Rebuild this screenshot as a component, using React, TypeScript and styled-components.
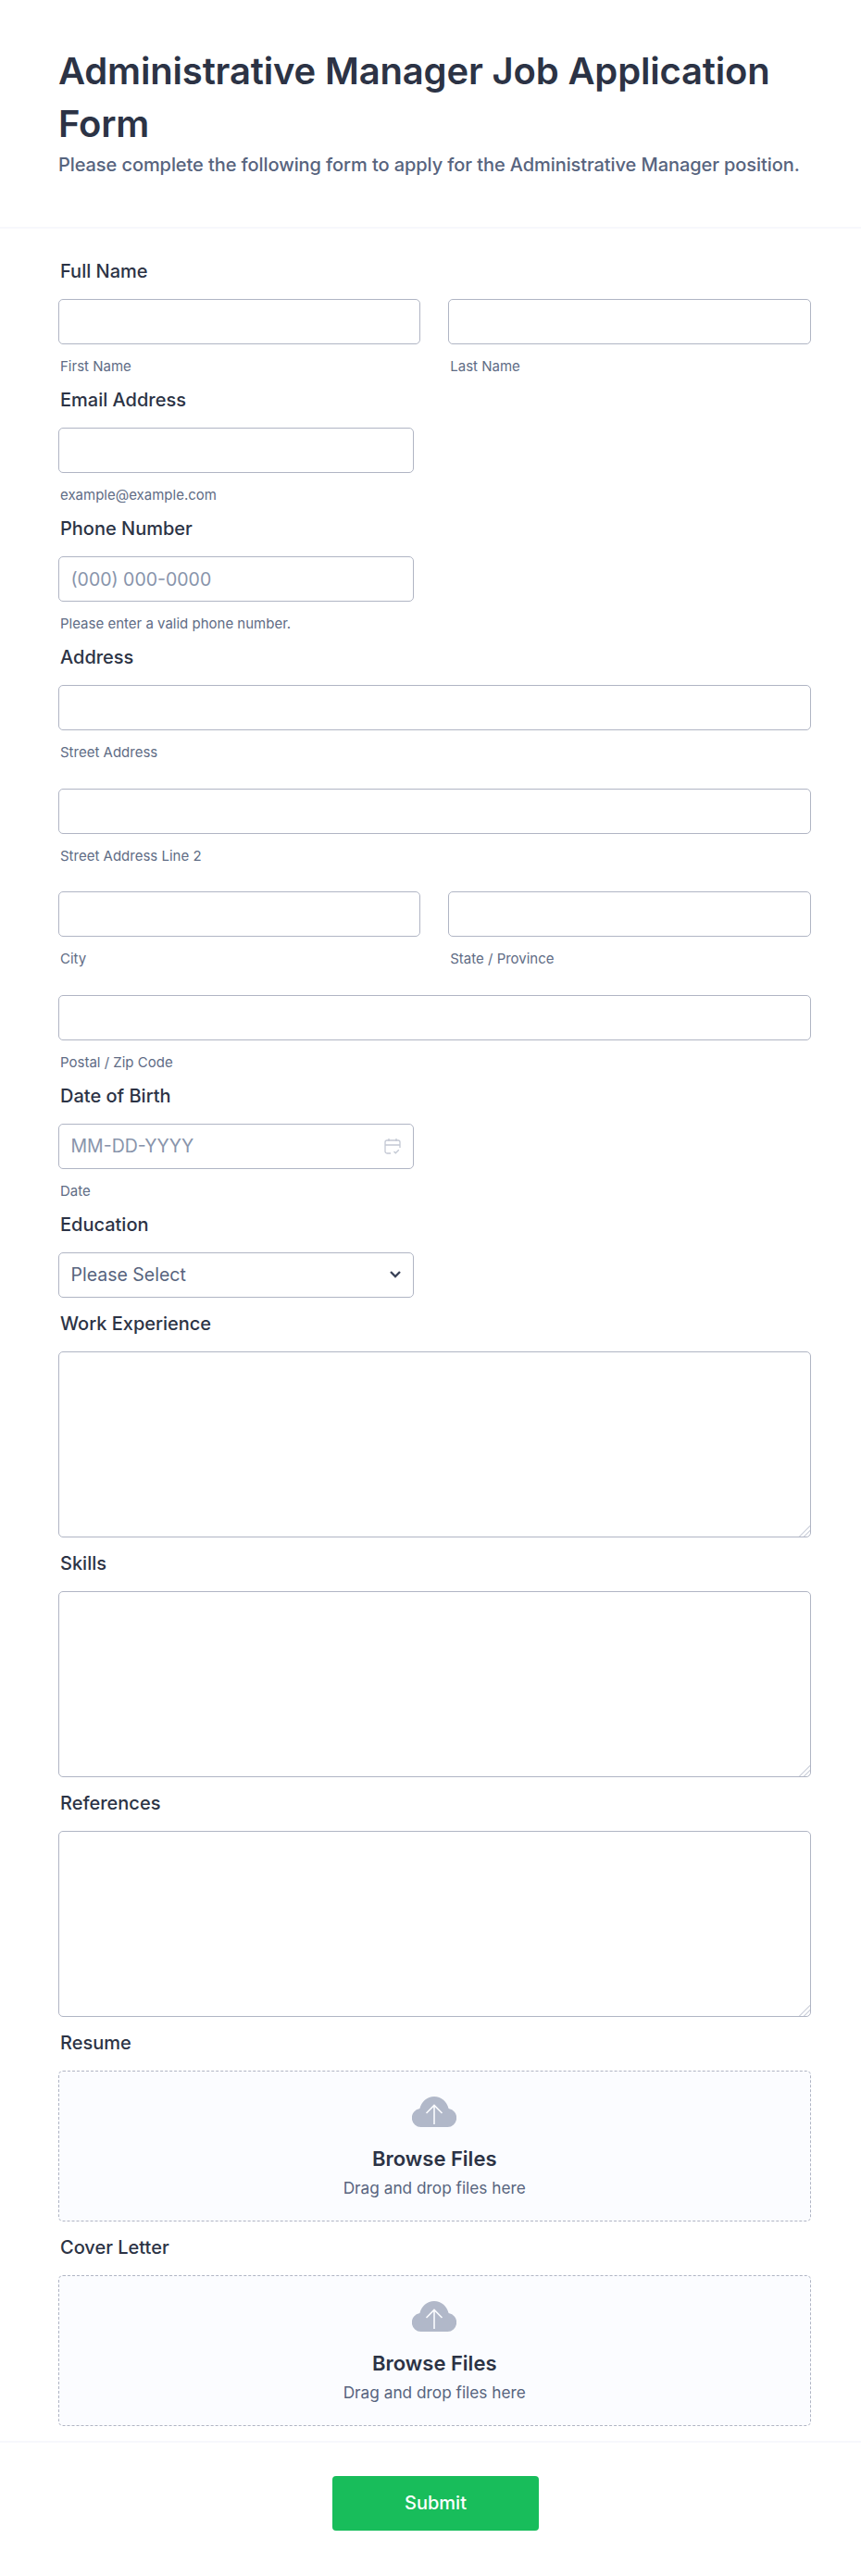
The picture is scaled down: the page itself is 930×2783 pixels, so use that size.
import React from "react";
import styled, { createGlobalStyle } from "styled-components";

const Global = createGlobalStyle`
  html, body { margin: 0; padding: 0; background: #fff; }
  * { box-sizing: border-box; }
  body { font-family: Inter, "Liberation Sans", sans-serif; color: #2c3345; }
`;

const Page = styled.div`
  width: 930px;
  height: 2783px;
  background: #fff;
`;
const Header = styled.header`
  padding: 48px 40px 49px 63px;
  border-bottom: 2px solid #f7f8fc;
  height: 247px;
`;
const Title = styled.h1`
  margin: 0;
  font-size: 40px;
  line-height: 57px;
  font-weight: 600;
  letter-spacing: -0.17px;
  color: #2c3345;
  max-width: 800px;
`;
const Subtitle = styled.p`
  margin: 0;
  font-size: 20px;
  line-height: 32px;
  font-weight: 500;
  letter-spacing: -0.08px;
  color: #57647e;
`;
const Body = styled.main`
  padding: 34px 54.5px 0 63px;
`;
const Field = styled.section<{ $sub?: boolean }>`
  padding-bottom: ${(p) => (p.$sub ? 15 : 16)}px;
`;
const Label = styled.label`
  display: block;
  padding-left: 2px;
  font-size: 20px;
  line-height: 25px;
  font-weight: 500;
  color: #2c3345;
  margin-bottom: 17px;
`;
const Row = styled.div`
  display: grid;
  grid-template-columns: 1fr 1fr;
  gap: 30px;
`;
const Group = styled.div<{ $last?: boolean }>`
  margin-bottom: ${(p) => (p.$last ? 0 : 29.5)}px;
`;
const Input = styled.input<{ $half?: boolean }>`
  display: block;
  width: ${(p) => (p.$half ? "384px" : "100%")};
  height: 49px;
  padding: 0 12.5px;
  border: 1px solid #b0b5c4;
  border-radius: 5px;
  background: #fff;
  font: 400 19.5px Inter, sans-serif;
  color: #2c3345;
  outline: none;
  &::placeholder { color: #8894ab; opacity: 1; }
`;
const Sub = styled.div`
  margin-top: 15px;
  padding-left: 2px;
  font-size: 15px;
  line-height: 18px;
  color: #606c85;
`;
const Control = styled.div`
  position: relative;
  width: 384px;
`;
const CalendarIcon = styled.svg`
  position: absolute;
  right: 14px;
  top: 15px;
  width: 18px;
  height: 19px;
  fill: none;
  stroke: #c3c8d4;
  stroke-width: 1.3;
  pointer-events: none;
`;
const Select = styled.select`
  display: block;
  width: 100%;
  height: 49px;
  padding: 0 12.5px;
  border: 1px solid #b0b5c4;
  border-radius: 5px;
  background: #fff;
  appearance: none;
  font: 400 19.5px Inter, sans-serif;
  color: #57647e;
  outline: none;
`;
const Chevron = styled.svg`
  position: absolute;
  right: 13px;
  top: 19px;
  width: 14px;
  height: 10px;
  fill: none;
  stroke: #3a4358;
  stroke-width: 2.4;
  pointer-events: none;
`;
const TextArea = styled.textarea`
  display: block;
  width: 100%;
  height: 201px;
  border: 1px solid #b0b5c4;
  border-radius: 5px;
  background: #fff;
  outline: none;
  resize: vertical;
  &::-webkit-resizer {
    background: linear-gradient(
      135deg,
      transparent 58%,
      #d8dbe3 58%,
      #d8dbe3 65%,
      transparent 65%,
      transparent 74%,
      #d8dbe3 74%,
      #d8dbe3 81%,
      transparent 81%
    );
  }
`;
const Drop = styled.div`
  height: 163px;
  border: 1px dashed #b0b5c4;
  border-radius: 5px;
  background: #fbfcff;
  display: flex;
  flex-direction: column;
  align-items: center;
  padding-top: 27px;
`;
const Cloud = styled.svg`
  display: block;
  width: 48px;
  height: 33px;
`;
const Browse = styled.div`
  margin-top: 19px;
  font-size: 22px;
  line-height: 30px;
  font-weight: 600;
  color: #2c3345;
`;
const Drag = styled.div`
  margin-top: 4px;
  font-size: 17.25px;
  line-height: 26px;
  color: #57647e;
`;
const Footer = styled.footer`
  border-top: 2px solid #f7f8fc;
  padding: 36px 0 0 11px;
  display: flex;
  justify-content: center;
`;
const Submit = styled.button`
  width: 223px;
  height: 59px;
  border: 0;
  border-radius: 4px;
  background: #18bd5b;
  color: #fff;
  font: 500 20px Inter, sans-serif;
`;

const UploadZone = () => (
  <Drop>
    <Cloud viewBox="0 0 48 33">
      <path
        fill="#b1b8c9"
        d="M10 33a10 10 0 0 1-1.600-19.900C10 5.600 16.300 0 24 0s14 5.600 15.600 13.100A10 10 0 0 1 38 33Z"
      />
      <path fill="none" stroke="#fbfcff" strokeWidth="1.6" d="M24 30V9.500M15.500 18 24 9.500l8.500 8.500" />
    </Cloud>
    <Browse>Browse Files</Browse>
    <Drag>Drag and drop files here</Drag>
  </Drop>
);

export default function App() {
  return (
    <Page>
      <Global />
      <Header>
        <Title>Administrative Manager Job Application Form</Title>
        <Subtitle>Please complete the following form to apply for the Administrative Manager position.</Subtitle>
      </Header>
      <Body>
        <Field $sub>
          <Label>Full Name</Label>
          <Row>
            <div><Input /><Sub>First Name</Sub></div>
            <div><Input /><Sub>Last Name</Sub></div>
          </Row>
        </Field>
        <Field $sub>
          <Label>Email Address</Label>
          <Input $half />
          <Sub>example@example.com</Sub>
        </Field>
        <Field $sub>
          <Label>Phone Number</Label>
          <Input $half placeholder="(000) 000-0000" />
          <Sub>Please enter a valid phone number.</Sub>
        </Field>
        <Field $sub>
          <Label>Address</Label>
          <Group><Input /><Sub>Street Address</Sub></Group>
          <Group><Input /><Sub>Street Address Line 2</Sub></Group>
          <Group>
            <Row>
              <div><Input /><Sub>City</Sub></div>
              <div><Input /><Sub>State / Province</Sub></div>
            </Row>
          </Group>
          <Group $last><Input /><Sub>Postal / Zip Code</Sub></Group>
        </Field>
        <Field $sub>
          <Label>Date of Birth</Label>
          <Control>
            <Input placeholder="MM-DD-YYYY" />
            <CalendarIcon viewBox="0 0 18 19">
              <path d="M7 17H3A2 2 0 0 1 1 15V5a2 2 0 0 1 2-2h12a2 2 0 0 1 2 2v6M1 8h16M5 1v3M13 1v3M10.500 15l1.800 1.800 3.500-3.500" />
            </CalendarIcon>
          </Control>
          <Sub>Date</Sub>
        </Field>
        <Field>
          <Label>Education</Label>
          <Control>
            <Select defaultValue="">
              <option value="">Please Select</option>
            </Select>
            <Chevron viewBox="0 0 14 10">
              <path d="M2 2l5 5 5-5" />
            </Chevron>
          </Control>
        </Field>
        <Field>
          <Label>Work Experience</Label>
          <TextArea />
        </Field>
        <Field>
          <Label>Skills</Label>
          <TextArea />
        </Field>
        <Field>
          <Label>References</Label>
          <TextArea />
        </Field>
        <Field>
          <Label>Resume</Label>
          <UploadZone />
        </Field>
        <Field>
          <Label>Cover Letter</Label>
          <UploadZone />
        </Field>
      </Body>
      <Footer><Submit>Submit</Submit></Footer>
    </Page>
  );
}
